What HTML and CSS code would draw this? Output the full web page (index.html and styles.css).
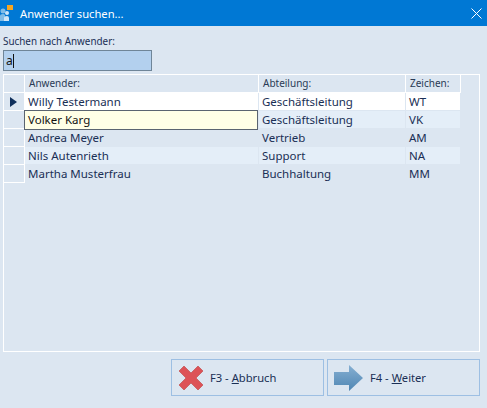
FILE: index.html
```html
<!DOCTYPE html>
<html lang="de">
<head>
  <meta charset="UTF-8" />
  <title>Anwender suchen...</title>
  <link rel="stylesheet" href="styles.css">
</head>
<body>
  <div class="titlebar">
    <svg class="app-icon" width="18" height="26" viewBox="0 0 18 26">
      <rect x="7" y="5" width="6" height="5" fill="#f5a623"/>
      <circle cx="3" cy="11" r="2.5" fill="#7fbce8"/>
      <path d="M0 21 V16 Q0 14 3 14 Q4.500 14 5 15 V21 Z" fill="#7fbce8"/>
      <circle cx="7" cy="13" r="2" fill="#cfe6f8"/>
      <path d="M4 21 V18 Q4 16 7 16 Q9 16 9 18 V21 Z" fill="#cfe6f8"/>
    </svg>
    <span class="title">Anwender suchen...</span>
    <svg class="close" width="11" height="11" viewBox="0 0 11 11">
      <path d="M0.5 0.5 L10.5 10.5 M10.5 0.5 L0.5 10.5" stroke="#fff" stroke-width="1" fill="none"/>
    </svg>
  </div>

  <div class="content">
    <label class="search-label">Suchen nach Anwender:</label>
    <div class="search-box">a<span class="caret"></span></div>

    <div class="grid">
      <div class="row head">
        <div class="ind"></div>
        <div class="cell name">Anwender:</div>
        <div class="cell dept">Abteilung:</div>
        <div class="cell sign">Zeichen:</div>
      </div>
      <div class="row current">
        <div class="ind"><span class="arrow"></span></div>
        <div class="cell name">Willy Testermann</div>
        <div class="cell dept">Geschäftsleitung</div>
        <div class="cell sign">WT</div>
      </div>
      <div class="row alt">
        <div class="ind"></div>
        <div class="cell name editing">Volker Karg</div>
        <div class="cell dept">Geschäftsleitung</div>
        <div class="cell sign">VK</div>
      </div>
      <div class="row">
        <div class="ind"></div>
        <div class="cell name">Andrea Meyer</div>
        <div class="cell dept">Vertrieb</div>
        <div class="cell sign">AM</div>
      </div>
      <div class="row alt">
        <div class="ind"></div>
        <div class="cell name">Nils Autenrieth</div>
        <div class="cell dept">Support</div>
        <div class="cell sign">NA</div>
      </div>
      <div class="row">
        <div class="ind"></div>
        <div class="cell name">Martha Musterfrau</div>
        <div class="cell dept">Buchhaltung</div>
        <div class="cell sign">MM</div>
      </div>
    </div>

    <div class="buttons">
      <button class="btn">
        <svg width="26" height="26" viewBox="0 0 26 26">
          <path d="M6 1 L13 8 L20 1 L25 6 L18 13 L25 20 L20 25 L13 18 L6 25 L1 20 L8 13 L1 6 Z" fill="#dd5257" stroke="#c9676a" stroke-width="1" stroke-linejoin="round"/>
        </svg>
        <span>F3 - <u>A</u>bbruch</span>
      </button>
      <button class="btn">
        <svg width="30" height="26" viewBox="0 0 30 26">
          <defs>
            <linearGradient id="arrowfill" x1="0" y1="0" x2="0" y2="1">
              <stop offset="0" stop-color="#86afd2"/>
              <stop offset="1" stop-color="#4f86b3"/>
            </linearGradient>
          </defs>
          <path d="M0 7 H15 V0 L29 13 L15 26 V20 H0 Z" fill="url(#arrowfill)"/>
        </svg>
        <span>F4 - <u>W</u>eiter</span>
      </button>
    </div>
  </div>
</body>
</html>
```

FILE: styles.css
```css
html, body {
  margin: 0;
  height: 100%;
}

body {
  background-color: #dce6f1;
  font-family: "Noto Sans", sans-serif;
  font-size: 11.5px;
  color: #1a2f55;
  overflow: hidden;
}

.titlebar {
  display: flex;
  align-items: center;
  height: 26px;
  background-color: #0078d4;
  color: #fff;
  overflow: hidden;
}

.app-icon {
  flex: none;
}

.title {
  margin-left: 2px;
  font-size: 11.2px;
}

.close {
  margin-left: auto;
  margin-right: 5px;
}

.content {
  padding: 8px 7px 0 3px;
}

.search-label {
  display: block;
  height: 16px;
  line-height: 15px;
  font-size: 9.9px;
}

.search-box {
  display: flex;
  align-items: center;
  box-sizing: border-box;
  width: 149px;
  height: 21px;
  padding-left: 2px;
  background-color: #b3d0ee;
  border: 1px solid #6f8598;
  font-size: 12px;
  color: #111;
}

.caret {
  width: 1px;
  height: 14px;
  background-color: #111;
}

.grid {
  box-sizing: border-box;
  height: 278px;
  margin-top: 3px;
  border: 1px solid #fff;
}

.row {
  display: flex;
  height: 18px;
  line-height: 17px;
}

.ind {
  flex: none;
  display: flex;
  align-items: center;
  justify-content: center;
  box-sizing: border-box;
  width: 21px;
  border-right: 1px solid #fff;
  border-bottom: 1px solid #fff;
}

.arrow {
  width: 0;
  height: 0;
  border-left: 7px solid #10305c;
  border-top: 5px solid transparent;
  border-bottom: 5px solid transparent;
  margin-left: -1px;
}

.cell {
  box-sizing: border-box;
  padding-left: 3px;
  margin-right: 1px;
  margin-bottom: 1px;
  white-space: nowrap;
}

.name { width: 233px; }
.dept { width: 146px; }
.sign { width: 54px; }

.head {
  font-size: 10px;
  color: #2a3b55;
}

.head .cell {
  padding-left: 4px;
  margin-right: 0;
  border-right: 1px solid #fff;
  border-bottom: 1px solid #fff;
  margin-bottom: 0;
  width: 234px;
}

.head .dept { width: 147px; }
.head .sign { width: 55px; }

.current .cell { background-color: #fff; }
.alt .cell { background-color: #e4eef8; }

.alt .editing {
  width: 234px;
  height: 20px;
  margin: -1px 1px 0 -1px;
  position: relative;
  background-color: #ffffe6;
  border: 1px solid #5a6470;
  color: #111;
}

.buttons {
  display: flex;
  justify-content: flex-end;
  gap: 3px;
  margin-top: 7px;
}

.btn {
  display: flex;
  align-items: center;
  gap: 6px;
  box-sizing: border-box;
  width: 153px;
  height: 37px;
  padding: 0 0 0 6px;
  background: transparent;
  border: 1px solid #9dbfe3;
  font: inherit;
  font-size: 11.2px;
  color: inherit;
  text-align: left;
}
```
